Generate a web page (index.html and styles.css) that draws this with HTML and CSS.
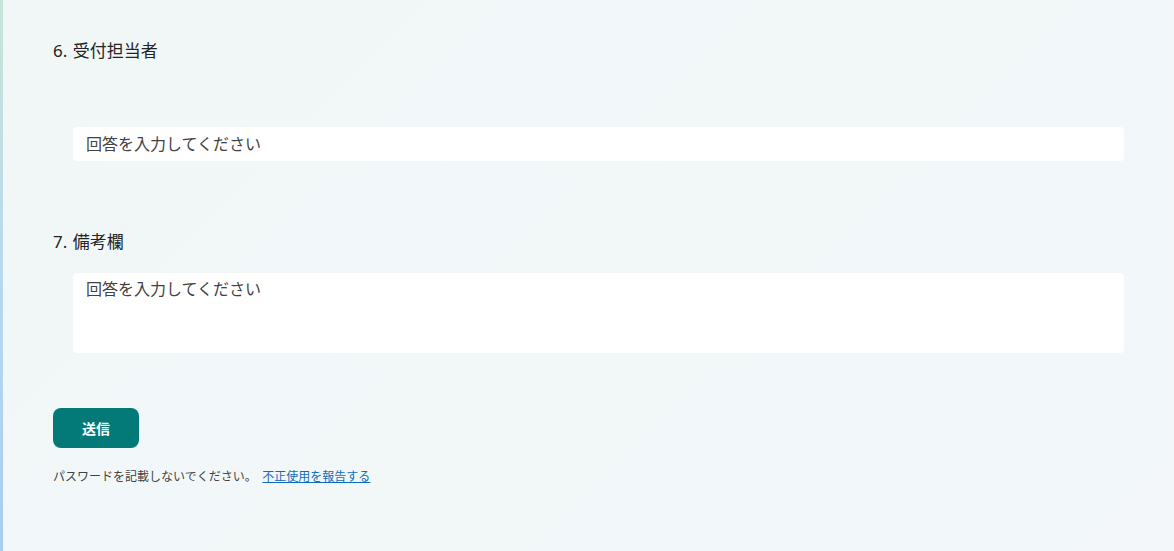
FILE: index.html
```html
<!DOCTYPE html>
<html lang="ja">
<head>
<meta charset="utf-8">
<title>Form</title>
<link rel="stylesheet" href="styles.css">
</head>
<body>
<div class="page">
  <div class="edge"></div>
  <main class="form">
    <section class="question q6">
      <div class="label">6. 受付担当者</div>
      <div class="answer input">回答を入力してください</div>
    </section>
    <section class="question q7">
      <div class="label">7. 備考欄</div>
      <div class="answer textarea">回答を入力してください</div>
    </section>
    <button class="submit" type="button">送信</button>
    <p class="note">パスワードを記載しないでください。 <a href="#" class="report">不正使用を報告する</a></p>
  </main>
</div>
</body>
</html>
```
FILE: styles.css
```css
html, body {
  margin: 0;
  padding: 0;
  height: 100%;
}
body {
  font-family: "Noto Sans CJK JP", "Noto Sans", sans-serif;
  color: #242424;
  background: #f2f7f8;
}
.page {
  display: flex;
  min-height: 551px;
  background: linear-gradient(135deg, #f1f7f7 0%, #f3f7fa 100%);
}
.edge {
  width: 3px;
  flex: none;
  background: linear-gradient(180deg, #c9e4d8 0%, #b9d8ec 50%, #a7cdf0 100%);
}
.form {
  flex: 1;
  padding: 39px 50px 0 50px;
}
.question {
  display: flex;
  flex-direction: column;
}
.label {
  font-family: "Noto Sans", "Noto Sans CJK JP", sans-serif;
  font-size: 17px;
  line-height: 24px;
  word-spacing: 1px;
}
.answer {
  margin-left: 20px;
  background: #ffffff;
  border-radius: 4px;
  font-size: 16px;
  color: #424242;
  padding: 0 13px;
}
.input {
  margin-top: 64px;
  height: 34px;
  line-height: 33px;
}
.q7 {
  margin-top: 69px;
}
.textarea {
  margin-top: 19px;
  height: 80px;
  line-height: 30px;
}
.submit {
  display: block;
  margin-top: 55px;
  width: 86px;
  height: 40px;
  border: none;
  border-radius: 8px;
  background: #037a78;
  color: #ffffff;
  font-family: inherit;
  font-weight: 700;
  font-size: 14px;
  padding: 0;
}
.note {
  margin: 20px 0 0;
  font-size: 12px;
  line-height: 16px;
  color: #424242;
}
.report {
  margin-left: 3px;
  color: #0f6cbd;
  text-decoration: underline;
}
```
